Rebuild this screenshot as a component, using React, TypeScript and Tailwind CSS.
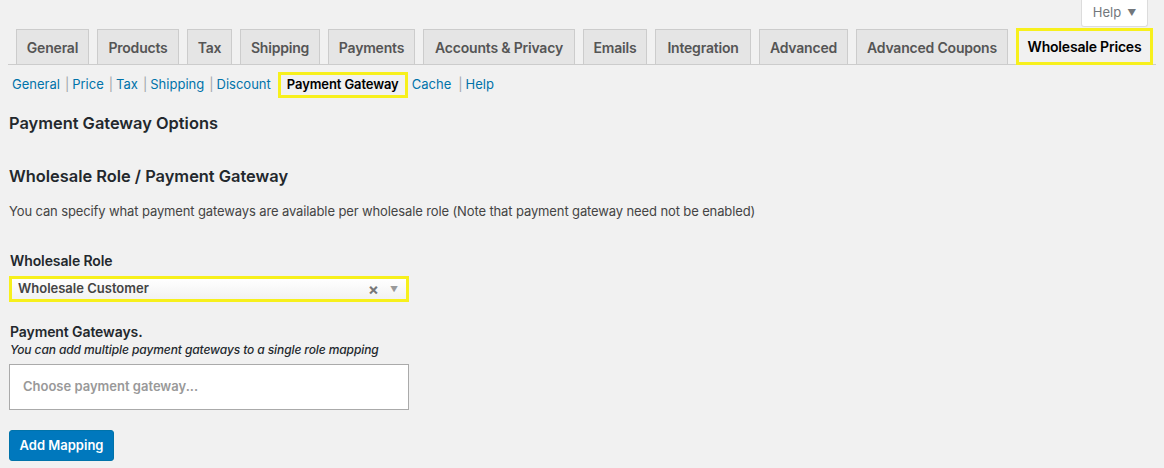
import React from 'react';

const tabs = [
  { label: 'General', w: 'w-[73px]' },
  { label: 'Products', w: 'w-[82px]' },
  { label: 'Tax', w: 'w-[45px]' },
  { label: 'Shipping', w: 'w-[80px]' },
  { label: 'Payments', w: 'w-[87px]' },
  { label: 'Accounts & Privacy', w: 'w-[152px]' },
  { label: 'Emails', w: 'w-[64px]' },
  { label: 'Integration', w: 'w-[96px]' },
  { label: 'Advanced', w: 'w-[89px]' },
  { label: 'Advanced Coupons', w: 'w-[152px]' },
];

const subLinks = ['General', 'Price', 'Tax', 'Shipping'];

export default function App() {
  return (
    <div
      className="min-h-[468px] w-full bg-[#f1f1f1] text-[#23282d]"
      style={{ fontFamily: 'Inter, "Liberation Sans", Arial, sans-serif' }}
    >
      {/* help tab */}
      <div className="flex h-[28px] justify-end pr-[16px]">
        <button className="flex h-[27px] w-[67px] items-center justify-center gap-[6px] rounded-b-[3px] border border-t-0 border-[#dcdcdc] bg-white text-[13px] text-[#72777c]">
          Help
          <span className="text-[9px]">▼</span>
        </button>
      </div>

      {/* main tabs */}
      <div className="mx-[8px] flex items-end gap-[8px] border-b border-[#ccc] pl-[8px]">
        {tabs.map((t) => (
          <div
            key={t.label}
            className={`-mb-px flex h-[36px] items-center justify-center whitespace-nowrap border border-[#ccc] bg-[#e5e5e5] text-[14px] font-semibold tracking-[-0.2px] text-[#555] ${t.w}`}
          >
            {t.label}
          </div>
        ))}
        <div className="-mb-px flex h-[37px] w-[137px] items-center justify-center whitespace-nowrap border-[3px] border-[#f7f01c] bg-[#f1f1f1] text-[14px] font-semibold tracking-[-0.2px] text-black">
          Wholesale Prices
        </div>
      </div>

      {/* sub navigation */}
      <div className="mt-[7px] flex h-[26px] items-center whitespace-nowrap pl-[12px] text-[13px]">
        {subLinks.map((l) => (
          <span key={l} className="flex items-center">
            <span className="text-[#0073aa]">{l}</span>
            <span className="ml-[5px] mr-[3px] text-[#a0a5aa]">|</span>
          </span>
        ))}
        <span className="text-[#0073aa]">Discount</span>
        <span className="ml-[7px] flex h-[26px] w-[130px] items-center justify-center border-[3px] border-[#f7f01c] font-semibold tracking-[-0.1px] text-black">
          Payment Gateway
        </span>
        <span className="ml-[4px] text-[#0073aa]">Cache</span>
        <span className="ml-[7px] mr-[3px] text-[#a0a5aa]">|</span>
        <span className="text-[#0073aa]">Help</span>
      </div>

      <div className="px-[9px]">
        <h2 className="mt-[15px] text-[16.4px] font-semibold leading-[20px]">Payment Gateway Options</h2>

        <h3 className="mt-[32px] text-[16.4px] font-semibold leading-[22px]">
          Wholesale Role / Payment Gateway
        </h3>
        <p className="mt-[14px] text-[13px] leading-[20px] tracking-[-0.12px] text-[#444]">
          You can specify what payment gateways are available per wholesale role (Note that payment gateway need not be enabled)
        </p>

        <div className="mt-[30px] pl-px text-[14px] font-semibold leading-[20px] tracking-[-0.1px]">Wholesale Role</div>
        <div className="mt-[5px] flex h-[26px] w-[400px] items-center border-[3px] border-[#f7f01c] bg-gradient-to-b from-white to-[#f2f2f2] pl-[6px] pr-[8px]">
          <span className="flex-1 text-[13px] font-semibold text-[#444]">Wholesale Customer</span>
          <span className="text-[16px] font-bold leading-none text-[#777]">×</span>
          <span className="ml-[11px] text-[8px] text-[#999]">▼</span>
        </div>

        <div className="mt-[20px] pl-px text-[14px] font-semibold leading-[20px] tracking-[-0.1px]">Payment Gateways.</div>
        <div className="pl-px text-[12px] font-medium italic leading-[16px] tracking-[-0.1px] text-[#23282d]">
          You can add multiple payment gateways to a single role mapping
        </div>
        <div className="mt-[6px] flex h-[46px] w-[400px] items-center border border-[#aaa] bg-white pl-[13px]">
          <span className="text-[13px] font-semibold text-[#999]">Choose payment gateway...</span>
        </div>

        <button className="mt-[20px] flex h-[31px] w-[105px] items-center justify-center rounded-[3px] border border-[#0073aa] bg-[#0078bd] text-[13px] font-semibold text-white">
          Add Mapping
        </button>
      </div>
    </div>
  );
}
